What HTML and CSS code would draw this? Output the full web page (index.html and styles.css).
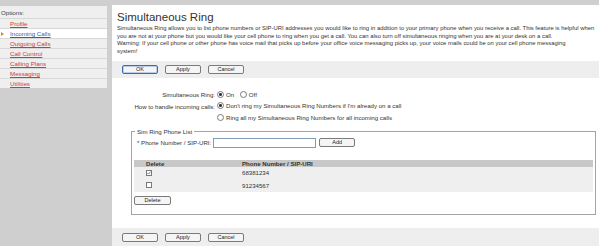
FILE: index.html
```html
<!DOCTYPE html>
<html lang="en">
<head>
    <meta charset="UTF-8">
    <title>Simultaneous Ring</title>
    <link rel="stylesheet" href="styles.css">
</head>
<body>
    <div class="page">
        <div class="nav">
            <div class="nav-title">Options:</div>
            <ul class="nav-list">
                <li><a href="#">Profile</a></li>
                <li class="current"><span class="arrow"></span><a href="#">Incoming Calls</a></li>
                <li><a href="#">Outgoing Calls</a></li>
                <li><a href="#">Call Control</a></li>
                <li><a href="#">Calling Plans</a></li>
                <li><a href="#">Messaging</a></li>
                <li><a href="#">Utilities</a></li>
            </ul>
        </div>

        <div class="main">
            <h1>Simultaneous Ring</h1>
            <p class="intro">Simultaneous Ring allows you to list phone numbers or SIP-URI addresses you would like to ring in addition to your primary phone when you receive a call. This feature is helpful when you are not at your phone but you would like your cell phone to ring when you get a call. You can also turn off simultaneous ringing when you are at your desk on a call.<br>Warning: If your cell phone or other phone has voice mail that picks up before your office voice messaging picks up, your voice mails could be on your cell phone messaging<br>system!</p>

            <div class="button-bar">
                <button class="focused">OK</button>
                <button>Apply</button>
                <button>Cancel</button>
            </div>

            <div class="settings">
                <div class="label">Simultaneous Ring:</div>
                <div class="options">
                    <label><span class="radio checked"></span>On</label>
                    <label><span class="radio"></span>Off</label>
                </div>
                <div class="label">How to handle incoming calls:</div>
                <div class="options">
                    <label><span class="radio checked"></span>Don't ring my Simultaneous Ring Numbers if I'm already on a call</label>
                </div>
                <div class="label"></div>
                <div class="options">
                    <label><span class="radio"></span>Ring all my Simultaneous Ring Numbers for all incoming calls</label>
                </div>
            </div>

            <fieldset class="phone-list">
                <legend>Sim Ring Phone List</legend>
                <div class="add-row">
                    <span>* Phone Number / SIP-URI:</span>
                    <input type="text" class="phone-input">
                    <button>Add</button>
                </div>
                <table class="numbers">
                    <tr>
                        <th class="col-delete">Delete</th>
                        <th>Phone Number / SIP-URI</th>
                    </tr>
                    <tr>
                        <td class="col-delete">
                            <span class="checkbox">
                                <svg viewBox="0 0 4 4" width="4" height="4"><path d="M0.4 1.9 L1.5 3.1 L3.6 0.6" stroke="#2f9a2f" stroke-width="0.9" fill="none"/></svg>
                            </span>
                        </td>
                        <td>68381234</td>
                    </tr>
                    <tr>
                        <td class="col-delete"><span class="checkbox"></span></td>
                        <td>91234567</td>
                    </tr>
                </table>
                <button class="delete-btn">Delete</button>
            </fieldset>

            <div class="button-bar bottom">
                <button>OK</button>
                <button>Apply</button>
                <button>Cancel</button>
            </div>
        </div>
    </div>
</body>
</html>
```

FILE: styles.css
```css
body {
    margin: 0;
    background-color: #cfcfcf;
    font-family: "Liberation Sans", Arial, sans-serif;
    font-size: 6.1px;
    color: #333;
}
.page {
    display: flex;
    align-items: flex-start;
    gap: 5px;
    padding-top: 5px;
}
.nav {
    width: 107px;
    margin-top: 1px;
    background: #efefef;
    font-size: 6.2px;
}
.nav-title {
    height: 12px;
    line-height: 13px;
    padding-left: 1px;
    color: #444;
    border-bottom: 1px solid #d8d8d8;
}
.nav-list {
    list-style: none;
    margin: 0;
    padding: 0;
}
.nav-list li {
    display: flex;
    align-items: center;
    height: 9px;
    padding-left: 10px;
    border-bottom: 1px solid #d8d8d8;
}
.nav-list li:last-child {
    border-bottom: none;
}
.nav-list a {
    color: #c83b3b;
}
.nav-list li.current {
    background: white;
    padding-left: 1px;
}
.nav-list li.current a {
    color: #2b5fb8;
}
.arrow {
    width: 0;
    height: 0;
    border-top: 2px solid transparent;
    border-bottom: 2px solid transparent;
    border-left: 3px solid #e08a1e;
    margin-right: 6px;
}
.main {
    flex: 1;
    background: white;
    min-height: 260px;
}
h1 {
    margin: 0;
    padding: 5px 5px 0;
    font-size: 11.5px;
    line-height: 14px;
    font-weight: normal;
    color: #333;
}
.intro {
    margin: 1px 0 0;
    padding: 0 2px 0 5px;
    font-size: 5.9px;
    line-height: 7.5px;
}
.button-bar {
    display: flex;
    gap: 7px;
    margin-top: 6px;
    padding: 4px 10px;
    background: #eeeeee;
}
.button-bar.bottom {
    margin-top: 13px;
    padding-top: 5px;
}
button {
    width: 36px;
    height: 9px;
    padding: 0;
    font-family: "Liberation Sans", Arial, sans-serif;
    font-size: 5.5px;
    line-height: 7px;
    color: #222;
    background: #f5f5f5;
    border: 1px solid #7a7a7a;
    border-radius: 2px;
}
button.focused {
    border-color: #3b6db4;
    box-shadow: inset 0 0 0 1px #b9cde8;
}
.settings {
    display: grid;
    grid-template-columns: 103px auto;
    grid-auto-rows: 11.5px;
    column-gap: 2px;
    align-items: center;
    margin-top: 11px;
}
.label {
    text-align: right;
}
.options label {
    display: inline-flex;
    align-items: center;
    margin-right: 4px;
}
.radio {
    display: inline-block;
    box-sizing: border-box;
    width: 7px;
    height: 7px;
    margin-right: 2px;
    border: 1px solid #7a7a7a;
    border-radius: 50%;
    background: white;
}
.radio.checked {
    background: radial-gradient(circle, #333 0 1.3px, white 1.6px);
}
.phone-list {
    margin: 4px 3px 0 19px;
    padding: 0 2px 9px;
    border: 1px solid #a5a5a5;
}
.phone-list legend {
    margin-left: 1px;
    padding: 0 2px;
    line-height: 8px;
}
.add-row {
    display: flex;
    align-items: center;
    margin-top: 2px;
    padding-left: 3px;
}
.phone-input {
    box-sizing: border-box;
    width: 103px;
    height: 10px;
    margin: 0 3px 0 2px;
    padding: 0;
    border: 1px solid #7f9db9;
}
.numbers {
    width: 100%;
    margin-top: 12px;
    border-collapse: collapse;
}
.numbers th {
    height: 7px;
    padding: 0;
    line-height: 7px;
    text-align: left;
    font-weight: bold;
    background: #c8c8c8;
}
.numbers td {
    height: 12.5px;
    padding: 0;
    background: #efefef;
}
.col-delete {
    width: 96px;
    padding-left: 12px !important;
}
.checkbox {
    display: block;
    box-sizing: border-box;
    width: 6px;
    height: 6px;
    border: 1px solid #7a7a7a;
    background: white;
}
.checkbox svg {
    display: block;
}
.delete-btn {
    display: block;
    width: 37px;
    margin-top: 4px;
}
```
